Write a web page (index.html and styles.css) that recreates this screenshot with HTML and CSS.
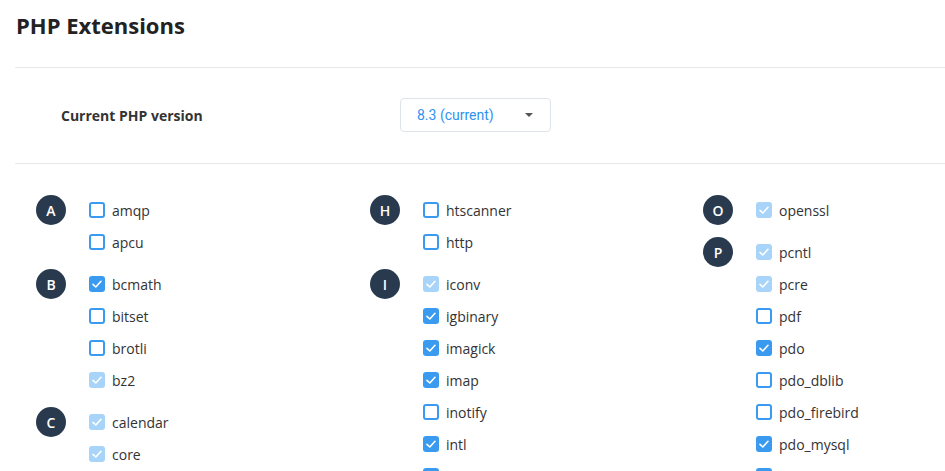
FILE: index.html
```html
<!DOCTYPE html>
<html lang="en">
<head>
<meta charset="utf-8">
<title>PHP Extensions</title>
<link rel="stylesheet" href="styles.css">
</head>
<body>
<h1 class="page-title">PHP Extensions</h1>
<div class="divider"></div>
<div class="version-row">
  <div class="version-label">Current PHP version</div>
  <div class="select">
    <span class="select-value">8.3 (current)</span>
    <span class="caret"></span>
  </div>
</div>
<div class="divider"></div>
<div class="ext-grid">
  <div class="col">
    <div class="group">
      <div class="letter">A</div>
      <ul class="items">
        <li class="item"><span class="cb"></span>amqp</li>
        <li class="item"><span class="cb"></span>apcu</li>
      </ul>
    </div>
    <div class="group">
      <div class="letter">B</div>
      <ul class="items">
        <li class="item"><span class="cb on"><svg viewBox="0 0 16 16"><polyline points="4,8.3 6.8,11 12,5.3"/></svg></span>bcmath</li>
        <li class="item"><span class="cb"></span>bitset</li>
        <li class="item"><span class="cb"></span>brotli</li>
        <li class="item"><span class="cb dis"><svg viewBox="0 0 16 16"><polyline points="4,8.3 6.8,11 12,5.3"/></svg></span>bz2</li>
      </ul>
    </div>
    <div class="group">
      <div class="letter">C</div>
      <ul class="items">
        <li class="item"><span class="cb dis"><svg viewBox="0 0 16 16"><polyline points="4,8.3 6.8,11 12,5.3"/></svg></span>calendar</li>
        <li class="item"><span class="cb dis"><svg viewBox="0 0 16 16"><polyline points="4,8.3 6.8,11 12,5.3"/></svg></span>core</li>
      </ul>
    </div>
  </div>
  <div class="col">
    <div class="group">
      <div class="letter">H</div>
      <ul class="items">
        <li class="item"><span class="cb"></span>htscanner</li>
        <li class="item"><span class="cb"></span>http</li>
      </ul>
    </div>
    <div class="group">
      <div class="letter">I</div>
      <ul class="items">
        <li class="item"><span class="cb dis"><svg viewBox="0 0 16 16"><polyline points="4,8.3 6.8,11 12,5.3"/></svg></span>iconv</li>
        <li class="item"><span class="cb on"><svg viewBox="0 0 16 16"><polyline points="4,8.3 6.8,11 12,5.3"/></svg></span>igbinary</li>
        <li class="item"><span class="cb on"><svg viewBox="0 0 16 16"><polyline points="4,8.3 6.8,11 12,5.3"/></svg></span>imagick</li>
        <li class="item"><span class="cb on"><svg viewBox="0 0 16 16"><polyline points="4,8.3 6.8,11 12,5.3"/></svg></span>imap</li>
        <li class="item"><span class="cb"></span>inotify</li>
        <li class="item"><span class="cb on"><svg viewBox="0 0 16 16"><polyline points="4,8.3 6.8,11 12,5.3"/></svg></span>intl</li>
        <li class="item"><span class="cb on"><svg viewBox="0 0 16 16"><polyline points="4,8.3 6.8,11 12,5.3"/></svg></span>ioncube_loader</li>
      </ul>
    </div>
  </div>
  <div class="col">
    <div class="group">
      <div class="letter">O</div>
      <ul class="items">
        <li class="item"><span class="cb dis"><svg viewBox="0 0 16 16"><polyline points="4,8.3 6.8,11 12,5.3"/></svg></span>openssl</li>
      </ul>
    </div>
    <div class="group">
      <div class="letter">P</div>
      <ul class="items">
        <li class="item"><span class="cb dis"><svg viewBox="0 0 16 16"><polyline points="4,8.3 6.8,11 12,5.3"/></svg></span>pcntl</li>
        <li class="item"><span class="cb dis"><svg viewBox="0 0 16 16"><polyline points="4,8.3 6.8,11 12,5.3"/></svg></span>pcre</li>
        <li class="item"><span class="cb"></span>pdf</li>
        <li class="item"><span class="cb on"><svg viewBox="0 0 16 16"><polyline points="4,8.3 6.8,11 12,5.3"/></svg></span>pdo</li>
        <li class="item"><span class="cb"></span>pdo_dblib</li>
        <li class="item"><span class="cb"></span>pdo_firebird</li>
        <li class="item"><span class="cb on"><svg viewBox="0 0 16 16"><polyline points="4,8.3 6.8,11 12,5.3"/></svg></span>pdo_mysql</li>
        <li class="item"><span class="cb on"><svg viewBox="0 0 16 16"><polyline points="4,8.3 6.8,11 12,5.3"/></svg></span>pdo_oci</li>
      </ul>
    </div>
  </div>
</div>
</body>
</html>
```

FILE: styles.css
```css
* { box-sizing: border-box; }
html, body { margin: 0; padding: 0; background: #fff; }
body {
  font-family: "Open Sans", "Noto Sans", sans-serif;
  color: #333;
  overflow: hidden;
}
.page-title {
  margin: 0;
  padding: 10px 16px 27px;
  font-size: 22px;
  line-height: 30px;
  font-weight: 700;
  color: #222;
}
.divider {
  margin-left: 15px;
  border-top: 1px solid #e8e8e8;
}
.version-row {
  display: flex;
  align-items: center;
  padding: 30px 0 31px 61px;
}
.version-label {
  width: 339px;
  font-size: 14px;
  font-weight: 700;
  color: #333;
}
.select {
  width: 151px;
  height: 34px;
  border: 1px solid #dfe3ea;
  border-radius: 4px;
  display: flex;
  align-items: center;
  justify-content: space-between;
  padding: 0 17px 0 16px;
}
.select-value {
  font-family: Roboto, "Liberation Sans", sans-serif;
  font-size: 14px;
  color: #2f93ee;
}
.caret {
  width: 0;
  height: 0;
  border-left: 4px solid transparent;
  border-right: 4px solid transparent;
  border-top: 4px solid #555;
}
.ext-grid {
  display: grid;
  grid-template-columns: 334px 333px 1fr;
  padding: 30px 0 0 36px;
}
.col {
  display: flex;
  flex-direction: column;
  gap: 10px;
}
.group {
  display: flex;
  align-items: flex-start;
}
.letter {
  width: 30px;
  height: 30px;
  margin-top: 1px;
  border-radius: 50%;
  background: #2a3a4e;
  color: #fff;
  font-size: 14px;
  font-weight: 600;
  display: flex;
  align-items: center;
  justify-content: center;
  flex: none;
}
.items {
  list-style: none;
  margin: 0 0 0 23px;
  padding: 0;
}
.item {
  height: 32px;
  display: flex;
  align-items: center;
  font-size: 14px;
  color: #333;
  white-space: nowrap;
}
.cb {
  width: 16px;
  height: 16px;
  border: 2px solid #3a9af0;
  border-radius: 3px;
  margin-right: 7px;
  flex: none;
  display: flex;
  align-items: center;
  justify-content: center;
}
.cb svg {
  width: 16px;
  height: 16px;
  flex: none;
}
.cb polyline {
  fill: none;
  stroke: #fff;
  stroke-width: 1.6;
  stroke-linecap: round;
  stroke-linejoin: round;
}
.cb.on {
  background: #3a9af0;
  border: none;
}
.cb.dis {
  background: #a7d4f8;
  border: none;
}
```
